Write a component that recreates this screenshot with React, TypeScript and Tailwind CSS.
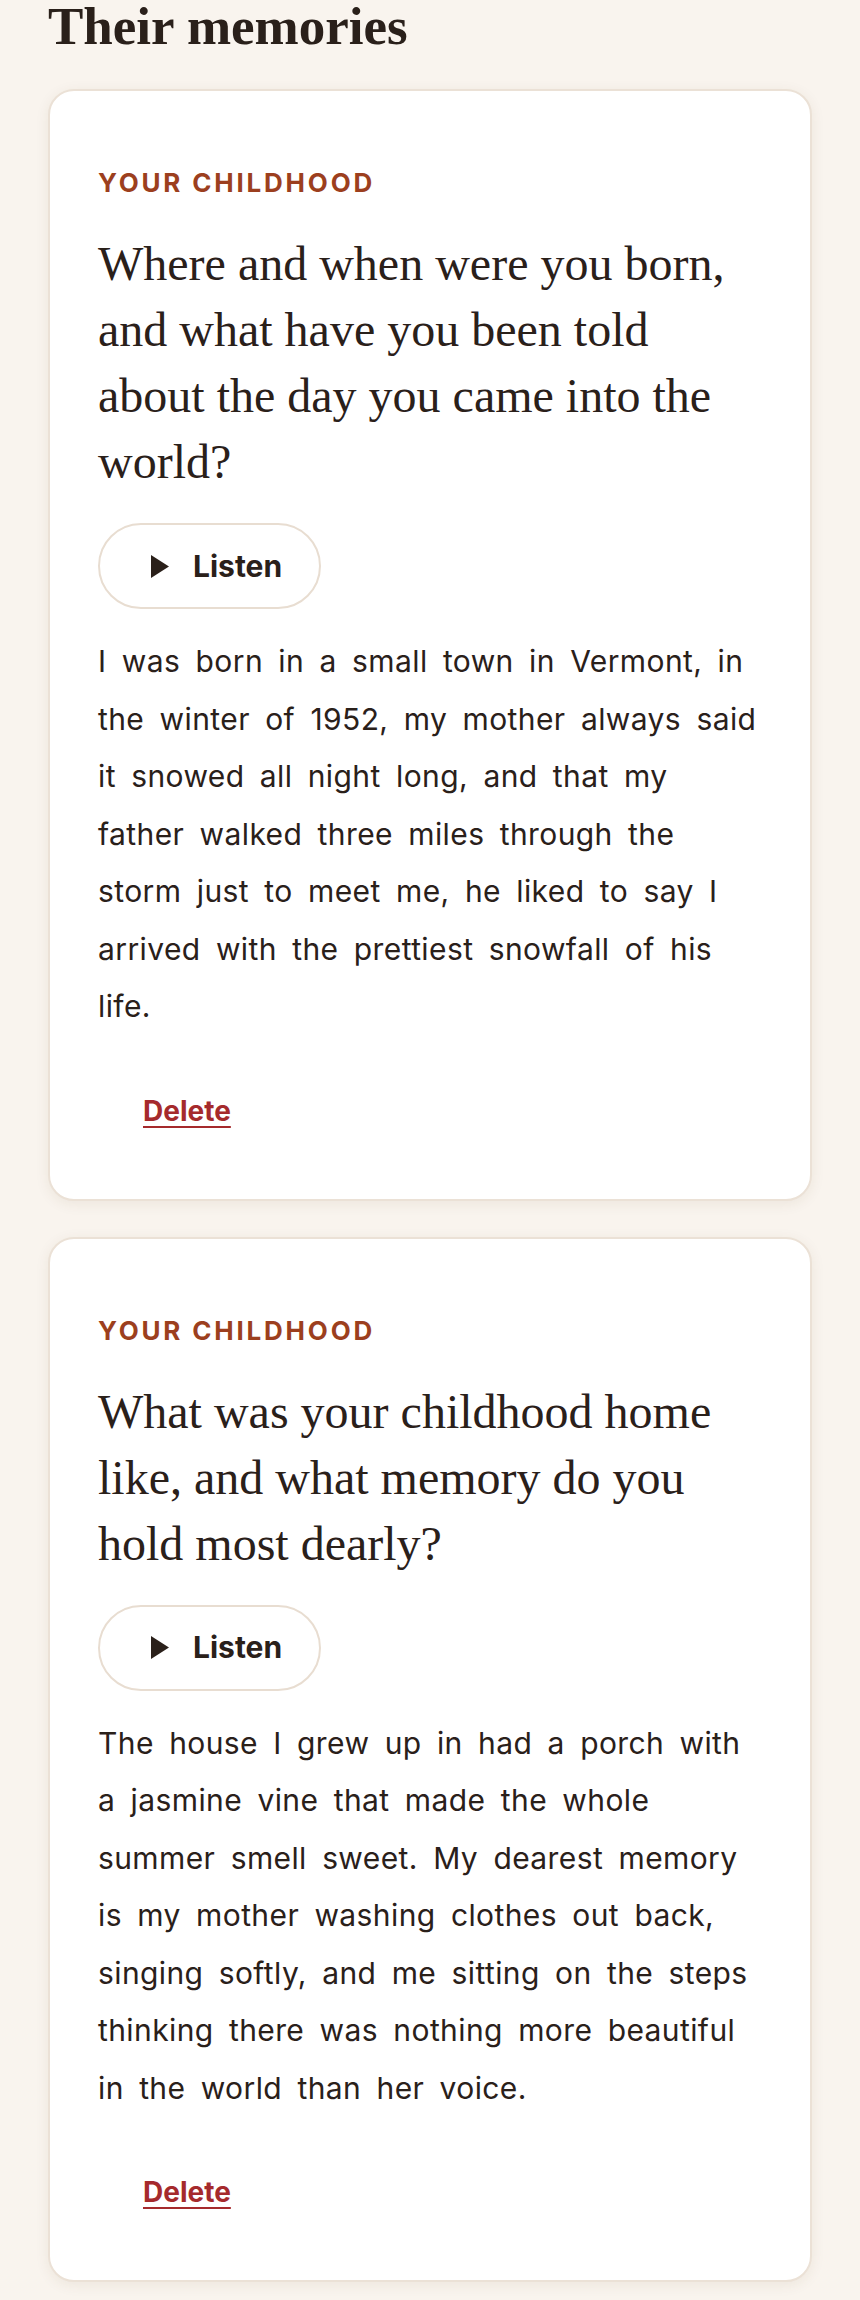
const MEMORIES = [
  {
    id: 1,
    category: 'Your childhood',
    question: 'Where and when were you born, and what have you been told about the day you came into the world?',
    answer:
      'I was born in a small town in Vermont, in the winter of 1952, my mother always said it snowed all night long, and that my father walked three miles through the storm just to meet me, he liked to say I arrived with the prettiest snowfall of his life.',
  },
  {
    id: 2,
    category: 'Your childhood',
    question: 'What was your childhood home like, and what memory do you hold most dearly?',
    answer:
      'The house I grew up in had a porch with a jasmine vine that made the whole summer smell sweet. My dearest memory is my mother washing clothes out back, singing softly, and me sitting on the steps thinking there was nothing more beautiful in the world than her voice.',
  },
];

type Memory = (typeof MEMORIES)[number];

function PlayIcon() {
  return (
    <svg width="18" height="23" viewBox="0 0 18 23" className="shrink-0">
      <polygon points="0,0 18,11.5 0,23" fill="#2a201a" />
    </svg>
  );
}

/**
 * A single memory card: category, question, listen button, answer and delete link
 */
function MemoryCard({ memory }: { memory: Memory }) {
  return (
    <article className="rounded-[26px] border-2 border-[#ebe1d6] bg-white px-[48px] pt-[72px] pb-[68px] shadow-[0_3px_14px_rgba(90,60,30,0.08)]">
      {/* Category */}
      <p className="mb-[28px] font-['Inter',sans-serif] text-[26px] leading-[40px] font-bold tracking-[2.8px] text-[#9c3f1e] uppercase">
        {memory.category}
      </p>

      {/* Question */}
      <h3 className="font-['Liberation_Serif',serif] text-[48px] leading-[66px] font-normal text-[#2a201a]">
        {memory.question}
      </h3>

      {/* Listen button */}
      <button
        type="button"
        className="mt-[28px] inline-flex h-[86px] items-center gap-[24px] rounded-full border-2 border-[#e8ddd1] bg-white pr-[37px] pl-[51px] font-['Inter',sans-serif] text-[30px] font-bold text-[#2a201a]"
      >
        <PlayIcon />
        Listen
      </button>

      {/* Answer */}
      <p className="mt-[24px] font-['Inter',sans-serif] text-[30px] leading-[57.5px] tracking-[0.4px] [word-spacing:6.5px] text-[#2a201a]">
        {memory.answer}
      </p>

      {/* Delete */}
      <div className="mt-[55px] pl-[45px]">
        <button
          type="button"
          className="font-['Inter',sans-serif] text-[28px] leading-[40px] font-bold text-[#a52a2c] underline decoration-2 underline-offset-[5px]"
        >
          Delete
        </button>
      </div>
    </article>
  );
}

export default function App() {
  return (
    <main className="min-h-screen bg-[#f9f4ee] px-[48px] pb-[40px]">
      <h2 className="font-['Liberation_Serif',serif] text-[53px] leading-none font-bold text-[#2a201a]">
        Their memories
      </h2>

      <div className="mt-[36px] flex flex-col gap-[36px]">
        {MEMORIES.map((m) => (
          <MemoryCard key={m.id} memory={m} />
        ))}
      </div>
    </main>
  );
}
